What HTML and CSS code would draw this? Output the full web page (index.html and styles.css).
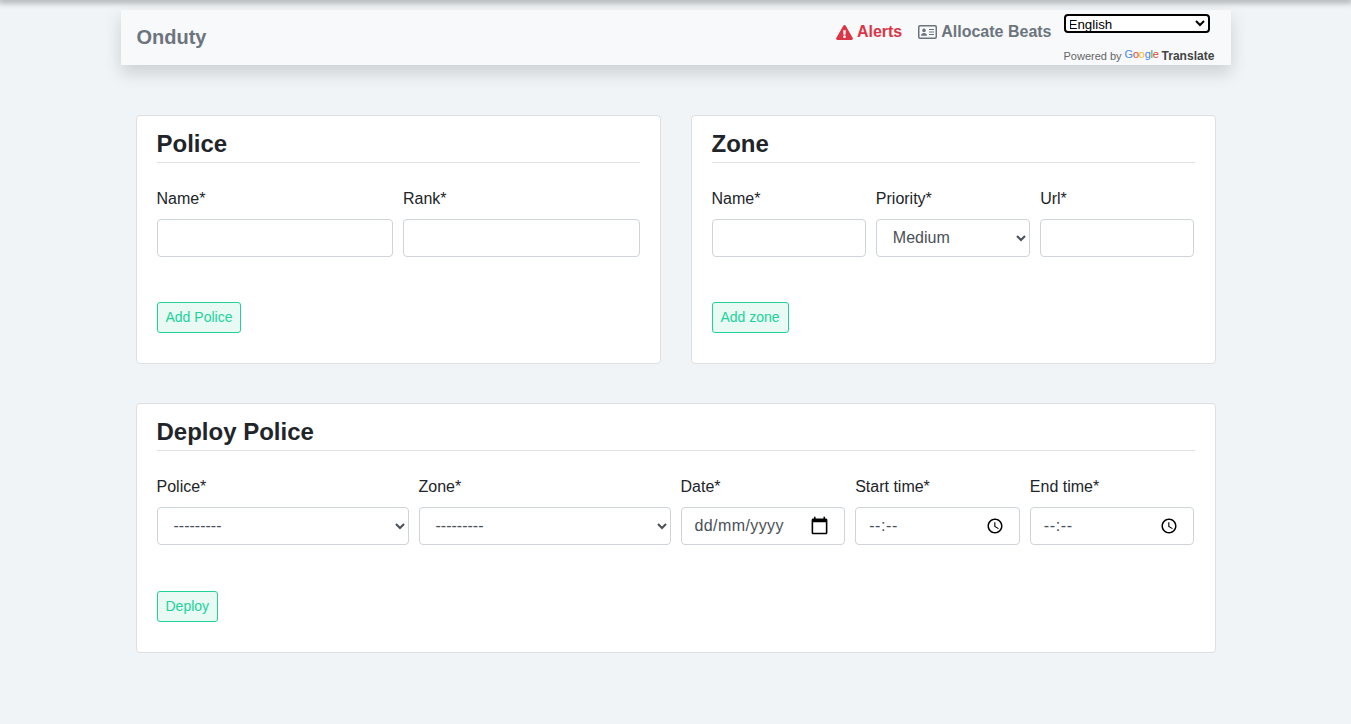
FILE: index.html
```html
<!DOCTYPE html>
<html lang="en">
<head>
    <meta charset="UTF-8">
    <meta name="viewport" content="width=device-width, initial-scale=1.0">
    <title>Onduty</title>
    <link rel="stylesheet" href="styles.css">
</head>
<body>
<div class="top-edge"></div>
<nav class="navbar">
    <a class="brand" href="#">Onduty</a>
    <div class="nav-right">
        <a class="nav-link nav-alert" href="#">
            <svg class="icon-alert" viewBox="0 0 576 512" width="17" height="15" fill="currentColor"><path d="M569.5 440L329.6 24c-18.400-32-64.700-32-83.200 0L6.500 440c-18.400 31.900 4.600 72 41.600 72H528c36.900 0 60-40 41.500-72zM288 354c-25.400 0-46 20.600-46 46s20.600 46 46 46 46-20.600 46-46-20.600-46-46-46zm-43.700-165.400l7.400 136c.3 6.400 5.600 11.400 12 11.400h48.600c6.400 0 11.700-5 12-11.400l7.400-136c.3-6.900-5.100-12.600-12-12.600h-63.400c-6.900 0-12.300 5.700-12 12.600z" fill-rule="evenodd"/></svg>
            Alerts
        </a>
        <a class="nav-link" href="#">
            <svg class="icon-card" viewBox="0 0 19 14" width="19" height="14">
                <rect x="0.75" y="0.75" width="17.500" height="12.500" rx="1.200" fill="none" stroke="currentColor" stroke-width="1.500"/>
                <circle cx="6" cy="5.400" r="1.800" fill="currentColor"/>
                <path d="M3 10.700c0-1.800 1.300-2.800 3-2.800s3 1 3 2.800z" fill="currentColor"/>
                <path d="M11 4.500h5M11 7h5M11 9.500h5" stroke="currentColor" stroke-width="1.100"/>
            </svg>
            Allocate Beats
        </a>
        <div class="translate">
            <select class="lang-select">
                <option>English</option>
            </select>
            <div class="powered">
                Powered by
                <span class="google"><span class="g-blue">G</span><span class="g-red">o</span><span class="g-yellow">o</span><span class="g-blue">g</span><span class="g-green">l</span><span class="g-red">e</span></span>
                <b>Translate</b>
            </div>
        </div>
    </div>
</nav>

<main class="content">
    <div class="card-row">
        <section class="card">
            <h2 class="card-title">Police</h2>
            <div class="form-grid">
                <div class="field span-6">
                    <label>Name*</label>
                    <input type="text">
                </div>
                <div class="field span-6">
                    <label>Rank*</label>
                    <input type="text">
                </div>
            </div>
            <button class="btn-add">Add Police</button>
        </section>
        <section class="card card-zone">
            <h2 class="card-title">Zone</h2>
            <div class="form-grid">
                <div class="field span-4">
                    <label>Name*</label>
                    <input type="text">
                </div>
                <div class="field span-4">
                    <label>Priority*</label>
                    <select><option>Medium</option></select>
                </div>
                <div class="field span-4">
                    <label>Url*</label>
                    <input type="text">
                </div>
            </div>
            <button class="btn-add">Add zone</button>
        </section>
    </div>

    <section class="card card-deploy">
        <h2 class="card-title">Deploy Police</h2>
        <div class="form-grid">
            <div class="field span-3">
                <label>Police*</label>
                <select><option>---------</option></select>
            </div>
            <div class="field span-3">
                <label>Zone*</label>
                <select><option>---------</option></select>
            </div>
            <div class="field span-2">
                <label>Date*</label>
                <div class="input-wrap">
                    <input class="input-date" type="text" placeholder="dd/mm/yyyy">
                    <svg class="icon-date" viewBox="0 0 24 24" width="19" height="19"><path d="M20 3h-1V1h-2v2H7V1H5v2H4c-1.100 0-2 .9-2 2v16c0 1.100.9 2 2 2h16c1.100 0 2-.9 2-2V5c0-1.100-.9-2-2-2zm0 18H4V8h16v13z"/></svg>
                </div>
            </div>
            <div class="field span-2">
                <label>Start time*</label>
                <div class="input-wrap">
                    <input class="input-time" type="text" placeholder="--:--">
                    <svg class="icon-time" viewBox="0 0 24 24" width="18" height="18"><path d="M11.990 2C6.470 2 2 6.480 2 12s4.470 10 9.990 10C17.520 22 22 17.520 22 12S17.520 2 11.990 2zM12 20c-4.420 0-8-3.580-8-8s3.580-8 8-8 8 3.580 8 8-3.580 8-8 8zm.5-13H11v6l5.250 3.150.75-1.230-4.500-2.670z"/></svg>
                </div>
            </div>
            <div class="field span-2">
                <label>End time*</label>
                <div class="input-wrap">
                    <input class="input-time" type="text" placeholder="--:--">
                    <svg class="icon-time" viewBox="0 0 24 24" width="18" height="18"><path d="M11.990 2C6.470 2 2 6.480 2 12s4.470 10 9.990 10C17.520 22 22 17.520 22 12S17.520 2 11.990 2zM12 20c-4.420 0-8-3.580-8-8s3.580-8 8-8 8 3.580 8 8-3.580 8-8 8zm.5-13H11v6l5.250 3.150.75-1.230-4.500-2.670z"/></svg>
                </div>
            </div>
        </div>
        <button class="btn-add">Deploy</button>
    </section>
</main>
</body>
</html>
```

FILE: styles.css
```css
html, body {
    margin: 0;
    padding: 0;
}
body {
    min-height: 724px;
    background-color: #f0f4f7;
    font-family: "Liberation Sans", Arial, sans-serif;
    font-size: 16px;
    color: #212529;
    overflow: hidden;
}
a {
    text-decoration: none;
}
.top-edge {
    height: 0;
    box-shadow: 0 0 6px 2px rgba(0, 0, 0, 0.45);
}
.navbar {
    display: flex;
    justify-content: space-between;
    width: 1078px;
    height: 55px;
    margin: 10px auto 0;
    padding: 0 16px;
    background-color: #f8f9fa;
    box-shadow: 0 8px 16px rgba(0, 0, 0, 0.15);
}
.brand {
    align-self: center;
    font-size: 20px;
    font-weight: 700;
    color: #6c757d;
}
.nav-right {
    display: flex;
    align-items: flex-start;
}
.nav-link {
    display: flex;
    align-items: center;
    gap: 4px;
    height: 44px;
    margin-right: 16px;
    font-weight: 700;
    color: #6c757d;
}
.nav-alert {
    color: #dc3545;
}
.nav-link:nth-child(2) {
    margin-right: 12px;
}
.translate {
    width: 151px;
    padding-top: 4px;
}
.lang-select {
    display: block;
    width: 146px;
    height: 19px;
    padding: 0;
    text-indent: -1px;
    border: 2px solid #000;
    border-radius: 4px;
    background-color: #fff;
    font-family: "Liberation Sans", Arial, sans-serif;
    font-size: 13.33px;
    color: #000;
}
.powered {
    display: flex;
    align-items: center;
    gap: 3px;
    margin-top: 16px;
    font-size: 11px;
    line-height: 15px;
    color: #666;
    white-space: nowrap;
}
.powered b {
    font-size: 12px;
    color: #444;
}
.google {
    position: relative;
    top: -2px;
    font-size: 11px;
    letter-spacing: -0.25px;
}
.g-blue { color: #4285f4; }
.g-red { color: #ea4335; }
.g-yellow { color: #fbbc05; }
.g-green { color: #34a853; }
.content {
    width: 1080px;
    margin: 50px auto 0;
}
.card-row {
    display: grid;
    grid-template-columns: 1fr 1fr;
    gap: 30px;
    margin-bottom: 39px;
}
.card {
    height: 249.4px;
    box-sizing: border-box;
    padding: 0 20px;
    background-color: #fff;
    border: 1px solid #dcdfe3;
    border-radius: 4px;
}
.card-title {
    margin: 0 0 26px;
    padding: 14px 0 4px;
    border-bottom: 1px solid #dee2e6;
    font-size: 24px;
    line-height: 28px;
    font-weight: 700;
    color: #212529;
}
.form-grid {
    display: grid;
    grid-template-columns: repeat(12, 1fr);
    gap: 10px;
}
.span-6 { grid-column: span 6; }
.span-4 { grid-column: span 4; }
.span-3 { grid-column: span 3; }
.span-2 { grid-column: span 2; }
.field {
    display: flex;
    flex-direction: column;
    min-width: 0;
}
.card-zone .field:last-child, .card-deploy .field:last-child {
    margin-right: 1px;
}
.field label {
    line-height: 20px;
    margin-bottom: 10px;
}
.field input, .field select {
    box-sizing: border-box;
    width: 100%;
    height: 38px;
    padding: 6px 12px;
    background-color: #fff;
    border: 1px solid #ced4da;
    border-radius: 4px;
    font-family: "Liberation Sans", Arial, sans-serif;
    font-size: 16px;
    color: #495057;
}
.field select {
    padding: 5px 12px 7px;
}
.field input::placeholder {
    color: #495057;
    opacity: 1;
}
.field .input-date {
    padding-left: 13px;
    letter-spacing: 0.4px;
}
.field .input-time {
    padding-left: 13px;
    letter-spacing: 0.6px;
}
.input-wrap {
    position: relative;
    height: 38px;
}
.input-wrap svg {
    position: absolute;
}
.icon-date {
    top: 9px;
    right: 16px;
}
.icon-time {
    top: 10px;
    right: 16px;
}
.btn-add {
    display: block;
    height: 31px;
    margin-top: 44.8px;
    padding: 0 8px;
    background-color: #e9faf4;
    border: 1px solid #20d29a;
    border-radius: 3px;
    font-family: "Liberation Sans", Arial, sans-serif;
    font-size: 14px;
    color: #20d29a;
}
.card-deploy .btn-add {
    margin-top: 45.4px;
}
```
